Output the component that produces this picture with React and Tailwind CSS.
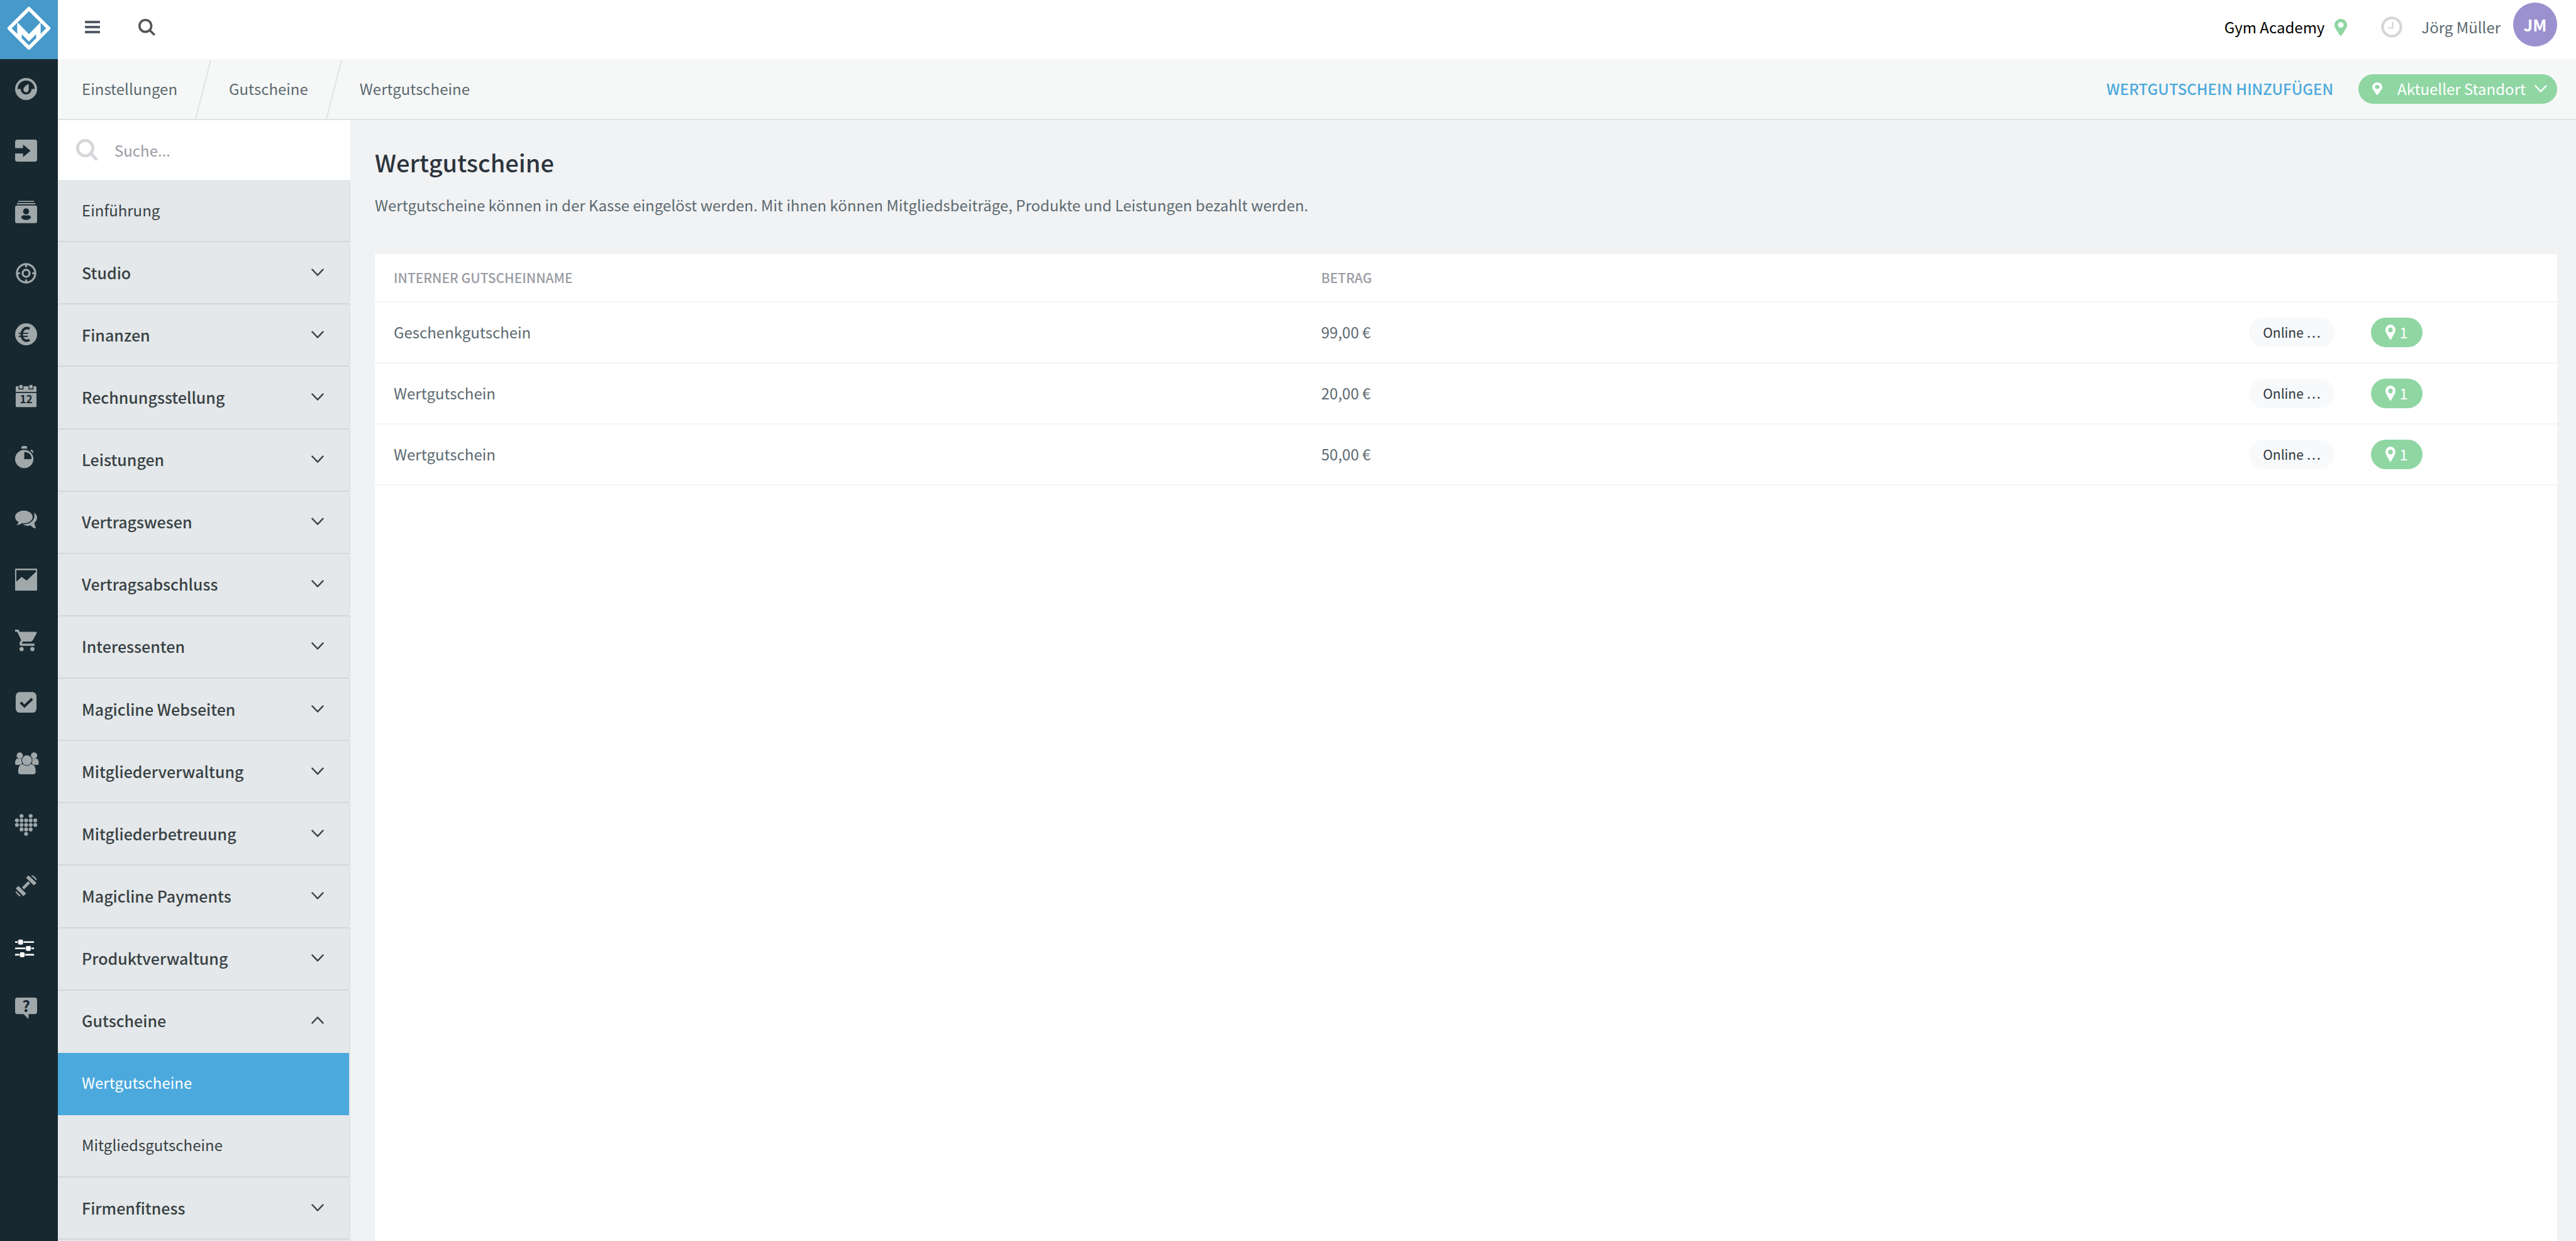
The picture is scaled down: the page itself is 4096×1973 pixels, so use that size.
import clsx from 'clsx';

const railItems = [
  { label: 'Dashboard', icon: GaugeIcon },
  { label: 'Check-in', icon: CheckinIcon },
  { label: 'Mitglieder', icon: ContactIcon },
  { label: 'Interessenten', icon: TargetIcon },
  { label: 'Finanzen', icon: EuroIcon },
  { label: 'Kalender', icon: CalendarIcon },
  { label: 'Zeiterfassung', icon: StopwatchIcon },
  { label: 'Kommunikation', icon: ChatIcon },
  { label: 'Auswertungen', icon: ChartIcon },
  { label: 'Verkauf', icon: CartIcon },
  { label: 'Aufgaben', icon: CheckIcon },
  { label: 'Mitarbeiter', icon: PeopleIcon },
  { label: 'Gesundheit', icon: HeartIcon },
  { label: 'Training', icon: DumbbellIcon },
  { label: 'Einstellungen', icon: SlidersIcon, active: true },
  { label: 'Hilfe', icon: HelpIcon },
];

const menu = [
  { label: 'Einführung', type: 'page' },
  { label: 'Studio' },
  { label: 'Finanzen' },
  { label: 'Rechnungsstellung' },
  { label: 'Leistungen' },
  { label: 'Vertragswesen' },
  { label: 'Vertragsabschluss' },
  { label: 'Interessenten' },
  { label: 'Magicline Webseiten' },
  { label: 'Mitgliederverwaltung' },
  { label: 'Mitgliederbetreuung' },
  { label: 'Magicline Payments' },
  { label: 'Produktverwaltung' },
  { label: 'Gutscheine', open: true },
  { label: 'Wertgutscheine', type: 'page', active: true },
  { label: 'Mitgliedsgutscheine', type: 'page' },
  { label: 'Firmenfitness' },
];

const vouchers = [
  { id: 1, name: 'Geschenkgutschein', amount: '99,00 €' },
  { id: 2, name: 'Wertgutschein', amount: '20,00 €' },
  { id: 3, name: 'Wertgutschein', amount: '50,00 €' },
];

const DARK = '#182831';

function RailSvg({ children }) {
  return (
    <svg viewBox="0 0 108 108" className="size-[35px] overflow-visible" fill="currentColor" aria-hidden="true">
      {children}
    </svg>
  );
}

function GaugeIcon() {
  return (
    <RailSvg>
      <circle cx="54" cy="54" r="54" />
      <path d="M12 54A42 42 0 0 1 96 54H81A27 27 0 0 1 27 54Z" fill={DARK} />
      <path d="M66 29C50 36 41 47 41 57A13 13 0 0 0 67 57V29Z" />
    </RailSvg>
  );
}

function CheckinIcon() {
  return (
    <RailSvg>
      <rect width="108" height="108" rx="12" />
      <path d="M-1 42H39V24L76 55L39 86V68H-1Z" fill={DARK} />
    </RailSvg>
  );
}

function ContactIcon() {
  return (
    <RailSvg>
      <rect x="15" y="1" width="78" height="5" />
      <rect x="9" y="12" width="90" height="6" />
      <rect y="24" width="108" height="86" rx="9" />
      <circle cx="54" cy="53" r="15" fill={DARK} />
      <path d="M30 84C30 73 44 70 46 71Q54 76 62 71C64 70 78 73 78 84Q68 95 54 95Q40 95 30 84Z" fill={DARK} />
    </RailSvg>
  );
}

function TargetIcon() {
  return (
    <RailSvg>
      <circle cx="54" cy="54" r="45" fill="none" stroke="currentColor" strokeWidth="10" />
      <circle cx="54" cy="54" r="17" fill="none" stroke="currentColor" strokeWidth="10" />
      <path d="M54 8V24M54 84V100M8 54H24M84 54H100" stroke="currentColor" strokeWidth="10" />
    </RailSvg>
  );
}

function EuroIcon() {
  return (
    <RailSvg>
      <circle cx="54" cy="54" r="54" />
      <path
        d="M71 27C58 21 47 24 41 31C30 43 30 68 41 79C48 87 59 87 71 82"
        fill="none"
        stroke={DARK}
        strokeWidth="12"
      />
      <path d="M18 49H64M18 64H62" stroke={DARK} strokeWidth="6" />
    </RailSvg>
  );
}

function CalendarIcon() {
  return (
    <RailSvg>
      <path d="M3 34V11Q3 6 8 6H17V22H41V6H66V22H90V6H100Q105 6 105 11V34Z" />
      <rect x="21" y="0" width="16" height="18" rx="4" />
      <rect x="70" y="0" width="16" height="18" rx="4" />
      <path d="M3 39H105V104Q105 109 100 109H8Q3 109 3 104Z" />
      <text x="54" y="90" textAnchor="middle" fontSize="53" fontWeight="700" fill={DARK}>
        12
      </text>
    </RailSvg>
  );
}

function StopwatchIcon() {
  return (
    <RailSvg>
      <path d="M30 13Q30 0 40 0H50Q60 0 60 13Z" />
      <path d="M77 19Q87 17 90 32L84 34Q83 26 75 24Z" />
      <circle cx="45" cy="64" r="45" />
      <path d="M45 34Q45 29 50 29Q77 34 81 59Q81 65 76 65H45Z" fill={DARK} />
    </RailSvg>
  );
}

function ChatIcon() {
  return (
    <RailSvg>
      <ellipse cx="43" cy="46" rx="43" ry="31" />
      <path d="M16 64C19 74 12 81 7 85C19 86 30 80 36 73Z" />
      <path d="M93 24C113 37 112 62 95 74C95 85 100 93 102 101C91 103 80 91 76 87C61 92 47 88 38 82C76 83 102 60 93 24Z" />
    </RailSvg>
  );
}

function ChartIcon() {
  return (
    <RailSvg>
      <rect width="108" height="108" rx="4" />
      <path d="M6 8H102V16L57 59L32 41L6 64Z" fill={DARK} />
    </RailSvg>
  );
}

function CartIcon() {
  return (
    <RailSvg>
      <path
        transform="scale(5.3) translate(-1 -2)"
        d="M7 18c-1.1 0-1.99.9-1.99 2S5.9 22 7 22s2-.9 2-2-.9-2-2-2zM1 2v2h2l3.6 7.59-1.35 2.45c-.16.28-.25.61-.25.96 0 1.1.9 2 2 2h12v-2H7.42c-.14 0-.25-.11-.25-.25l.03-.12.9-1.63h7.45c.75 0 1.41-.41 1.75-1.03l3.58-6.49c.08-.14.12-.31.12-.48 0-.55-.45-1-1-1H5.21l-.94-2H1zm16 16c-1.1 0-1.99.9-1.99 2s.89 2 1.99 2 2-.9 2-2-.9-2-2-2z"
      />
    </RailSvg>
  );
}

function CheckIcon() {
  return (
    <RailSvg>
      <rect x="3" y="4" width="102" height="101" rx="20" />
      <path d="M27 55L46 73L84 37" fill="none" stroke={DARK} strokeWidth="13" />
    </RailSvg>
  );
}

function PeopleIcon() {
  return (
    <RailSvg>
      <circle cx="23" cy="16" r="15.5" />
      <circle cx="93" cy="16" r="15.5" />
      <path d="M8 32H34V62H8Q0 62 0 54Q0 38 8 32Z" />
      <path d="M108 32H82V62H108Q116 62 116 54Q116 38 108 32Z" />
      <path
        d="M34 59H82Q101 64 101 94Q101 108 88 108H28Q15 108 15 94Q15 64 34 59Z"
        stroke={DARK}
        strokeWidth="5"
        paintOrder="stroke"
      />
      <circle cx="58" cy="39" r="24" stroke={DARK} strokeWidth="6" paintOrder="stroke" />
    </RailSvg>
  );
}

function HeartIcon() {
  const rows = [[1, 3], [0, 1, 2, 3, 4], [0, 1, 2, 3, 4], [1, 2, 3], [2]];
  return (
    <RailSvg>
      {rows.map((cols, y) =>
        cols.map((x) => <circle key={`${x}-${y}`} cx={9 + x * 22.5} cy={10 + y * 22} r="9.5" />)
      )}
    </RailSvg>
  );
}

function DumbbellIcon() {
  return (
    <RailSvg>
      <path d="M39 66L69 36" stroke="currentColor" strokeWidth="14" />
      <path d="M54 14L66 2L105 39L92 52Z" />
      <path d="M3 66L16 54L54 91L41 104Z" />
      <path d="M78 2H87Q101 10 105 19V28Z" />
      <path d="M3 78V86Q12 100 20 104H29Z" />
    </RailSvg>
  );
}

function SlidersIcon() {
  return (
    <RailSvg>
      <path d="M0 27H93M0 58H93M0 89H93" stroke="currentColor" strokeWidth="8" />
      {[[27, 27], [65, 58], [35, 89]].map(([x, y]) => (
        <rect
          key={y}
          x={x - 12}
          y={y - 12}
          width="24"
          height="24"
          rx="6"
          stroke={DARK}
          strokeWidth="5"
          paintOrder="stroke"
        />
      ))}
    </RailSvg>
  );
}

function HelpIcon() {
  return (
    <RailSvg>
      <path d="M12 0H96Q108 0 108 12V69Q108 81 96 81H66V106L42 81H12Q0 81 0 69V12Q0 0 12 0Z" />
      <text x="54" y="71" textAnchor="middle" fontSize="76" fontWeight="700" fill={DARK}>
        ?
      </text>
    </RailSvg>
  );
}

function Logo() {
  return (
    <svg viewBox="0 0 282 288" className="h-[94px] w-[92px]" aria-hidden="true">
      <path
        d="M141 42L237 138L141 234L45 138Z"
        fill="none"
        stroke="#fff"
        strokeWidth="17"
        strokeLinejoin="round"
      />
      <path d="M84 108L141 166L198 108V166L141 226L84 166Z" fill="#fff" />
      <path d="M106 167L141 202L176 167V186L141 221L106 186Z" fill="#4699c8" />
    </svg>
  );
}

function SearchIcon({ className }) {
  return (
    <svg viewBox="0 0 106 106" className={className} fill="none" stroke="currentColor" strokeWidth="14" aria-hidden="true">
      <circle cx="44" cy="44" r="37" />
      <path d="M71 71L101 101" />
    </svg>
  );
}

function PinIcon({ className }) {
  return (
    <svg viewBox="0 0 20 28" preserveAspectRatio="none" className={className} fill="currentColor" aria-hidden="true">
      <path
        fillRule="evenodd"
        d="M10 0C4.5 0 0 4.5 0 10C0 14 3 18 8.500 27Q10 29 11.500 27C17 18 20 14 20 10C20 4.500 15.500 0 10 0ZM10 5.500A4.500 4.500 0 1 1 10 14.500A4.500 4.500 0 1 1 10 5.500Z"
      />
    </svg>
  );
}

function ClockIcon() {
  return (
    <svg viewBox="0 0 36 36" className="size-[34px] text-[#d4d6d9]" fill="none" stroke="currentColor" aria-hidden="true">
      <circle cx="18" cy="18" r="15.5" strokeWidth="4.5" />
      <path d="M19.5 9V19.5H12" strokeWidth="2.5" />
    </svg>
  );
}

function Chevron({ up }) {
  return (
    <svg
      viewBox="0 0 20 12"
      className="h-3 w-5"
      fill="none"
      stroke="currentColor"
      strokeWidth="2.5"
      strokeLinecap="round"
      strokeLinejoin="round"
      aria-hidden="true"
    >
      <path d={up ? 'M1.5 10.5L10 1.5L18.5 10.5' : 'M1.5 1.5L10 10.5L18.5 1.5'} />
    </svg>
  );
}

function Slash() {
  return (
    <svg viewBox="0 0 26 94" className="h-[94px] w-[26px]" fill="none" aria-hidden="true">
      <path d="M25 1L1 94" stroke="#dde4e7" strokeWidth="2" />
    </svg>
  );
}

function Rail() {
  return (
    <aside className="flex w-[92px] shrink-0 flex-col bg-[#182831]">
      <a href="#" aria-label="Startseite" className="block h-[94px] bg-[#4699c8]">
        <Logo />
      </a>
      <div className="min-h-0 flex-1">
        <nav className="flex h-[83%] flex-col pr-2.5">
          {railItems.map(({ label, icon: Icon, active }) => (
            <a
              key={label}
              href="#"
              aria-label={label}
              className={clsx('flex flex-1 items-center justify-center pb-0.5', active ? 'text-white' : 'text-[#a0a8aa]')}
            >
              <Icon />
            </a>
          ))}
        </nav>
      </div>
    </aside>
  );
}

function TopBar() {
  return (
    <header className="flex h-[94px] shrink-0 items-center justify-between bg-white pr-[30px] pb-2 pl-[43px]">
      <div className="flex items-center">
        <button aria-label="Menü" className="flex w-6 flex-col gap-1">
          <span className="h-1 w-full rounded-[1px] bg-[#535b66]" />
          <span className="h-1 w-full rounded-[1px] bg-[#535b66]" />
          <span className="h-1 w-full rounded-[1px] bg-[#535b66]" />
        </button>
        <button aria-label="Suchen" className="ml-[61px] text-[#555]">
          <SearchIcon className="size-[27px]" />
        </button>
      </div>

      <div className="flex items-center">
        <span className="text-black">Gym Academy</span>
        <PinIcon className="ml-4 h-[27px] w-5 text-[#8fd6a3]" />
        <button aria-label="Stempeluhr" className="ml-[54px]">
          <ClockIcon />
        </button>
        <span className="ml-[30px]">Jörg Müller</span>
        <button className="-mt-2 ml-5 flex size-[70px] items-center justify-center rounded-full bg-[#9c91cf] text-[26px] font-bold text-white">
          JM
        </button>
      </div>
    </header>
  );
}

function CrumbBar() {
  return (
    <div className="flex h-[97px] shrink-0 items-center justify-between border-b-2 border-[#dde4e4] bg-[#f6f8f7] pr-[30px] pl-[38px]">
      <nav className="flex items-center gap-7">
        <a href="#" className="pb-0.5">Einstellungen</a>
        <Slash />
        <a href="#" className="pb-0.5">Gutscheine</a>
        <Slash />
        <a href="#" className="pb-0.5">Wertgutscheine</a>
      </nav>
      <div className="flex items-center gap-10">
        <button className="pb-0.5 font-medium text-[#4ca9dd] uppercase">Wertgutschein hinzufügen</button>
        <button className="flex h-[47px] items-center rounded-full bg-[#8fd6a3] pr-4 pb-0.5 pl-[22px] text-white">
          <PinIcon className="h-5 w-4" />
          <span className="ml-6">Aktueller Standort</span>
          <span className="ml-3.5">
            <Chevron />
          </span>
        </button>
      </div>
    </div>
  );
}

function Sidebar() {
  return (
    <aside className="flex w-[465px] shrink-0 flex-col">
      <label className="flex h-[95px] shrink-0 items-center bg-white pl-[29px]">
        <SearchIcon className="size-[35px] shrink-0 text-[#d4d6d9]" />
        <input
          type="text"
          aria-label="Suche"
          placeholder="Suche..."
          className="ml-[26px] w-full outline-none placeholder:text-[#999ca3]"
        />
      </label>
      <nav className="flex flex-1 flex-col border-r-2 border-[#dde4e4] bg-[#e4e8ea] pb-0.5 text-[#384144]">
        {menu.map((item) => {
          if (item.type === 'page') {
            return (
              <a
                key={item.label}
                href="#"
                className={clsx(
                  'flex flex-1 items-center border-b-2 pb-0.5 pl-[38px]',
                  item.active ? 'border-[#4ca9dd] bg-[#4ca9dd] text-white' : 'border-[#d1d9db]'
                )}
              >
                {item.label}
              </a>
            );
          }
          return (
            <button
              key={item.label}
              aria-expanded={!!item.open}
              className={clsx(
                'flex flex-1 items-center justify-between border-b-2 pr-10 pb-0.5 pl-[38px] text-[25px] font-medium',
                item.open ? 'border-transparent' : 'border-[#d1d9db]'
              )}
            >
              {item.label}
              <Chevron up={item.open} />
            </button>
          );
        })}
      </nav>
    </aside>
  );
}

function VoucherTable() {
  return (
    <table className="w-full table-fixed text-left">
      <thead>
        <tr className="h-[76px] border-b-2 border-[#f3f4f4] text-[21px] text-[#999ca3] uppercase">
          <th className="w-[42.5%] pb-0.5 pl-[30px] font-medium">Interner Gutscheinname</th>
          <th className="pb-0.5 pl-[30px] font-medium">Betrag</th>
          <th className="w-[194px]" />
          <th className="w-[296px]" />
        </tr>
      </thead>
      <tbody>
        {vouchers.map((voucher) => (
          <tr key={voucher.id} className="h-[97px] border-b-2 border-[#f3f4f4]">
            <td className="pb-0.5 pl-[30px]">{voucher.name}</td>
            <td className="pb-0.5 pl-[30px]">{voucher.amount}</td>
            <td>
              <span className="flex h-[47px] w-[136px] items-center justify-center rounded-full bg-[#f8f9fb] pb-0.5 text-[21px] text-[#2c343d]">
                Online …
              </span>
            </td>
            <td>
              <span className="flex h-[47px] w-[82px] items-center justify-center gap-1.5 rounded-full bg-[#8fd6a3] pb-0.5 text-white">
                <PinIcon className="h-6 w-4" />1
              </span>
            </td>
          </tr>
        ))}
      </tbody>
    </table>
  );
}

export default function App() {
  return (
    <div className="flex h-screen min-h-[1200px] overflow-hidden bg-[#f1f2f4] font-['Noto_Sans_CJK_SC',sans-serif] text-[24px] leading-9 text-[#5c6a71]">
      <Rail />
      <div className="flex min-w-0 flex-1 flex-col">
        <TopBar />
        <CrumbBar />
        <div className="flex min-h-0 flex-1">
          <Sidebar />
          <main className="flex min-w-0 flex-1 flex-col pt-[45px] pr-[30px] pl-[39px]">
            <h1 className="text-[38px] leading-[44px] font-medium text-[#2c343d]">Wertgutscheine</h1>
            <p className="mt-7">
              Wertgutscheine können in der Kasse eingelöst werden. Mit ihnen können Mitgliedsbeiträge, Produkte und
              Leistungen bezahlt werden.
            </p>
            <section className="mt-[60px] flex-1 bg-white">
              <VoucherTable />
            </section>
          </main>
        </div>
      </div>
    </div>
  );
}
